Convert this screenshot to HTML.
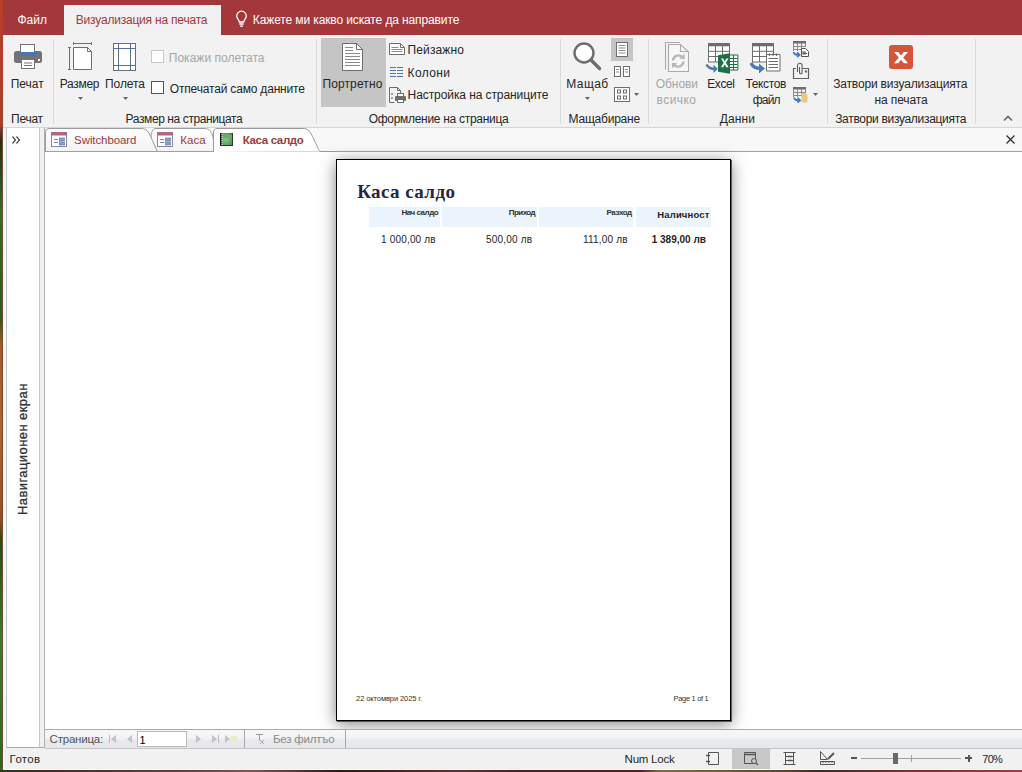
<!DOCTYPE html>
<html><head><meta charset="utf-8">
<style>
*{margin:0;padding:0;box-sizing:border-box}
html,body{width:1022px;height:772px;overflow:hidden;background:#f1f1f1;font-family:"Liberation Sans",sans-serif;color:#262626}
.a{position:absolute;white-space:nowrap}
.t{font-size:12px;line-height:14px}
.sep{position:absolute;width:1px;background:#dadada}
svg{position:absolute;overflow:visible}
.rp{font-family:"Liberation Sans",sans-serif;color:#262626}
</style></head><body>
<!-- wallpaper strips -->
<div class="a" style="left:0;top:0;width:3px;height:772px;background:linear-gradient(#b83e2a 0px,#a8402a 125px,#2a2a12 140px,#356a28 210px,#2e5a20 320px,#a8582a 345px,#b8602e 430px,#9a4a22 520px,#2a4a1a 540px,#3a7a2a 640px,#2a6a20 772px)"></div>
<div class="a" style="left:2px;top:128px;width:1px;height:642px;background:#7a4a30"></div>
<div class="a" style="left:0;top:770px;width:1022px;height:2px;background:linear-gradient(90deg,#2a3a1a 0px,#4a2a22 40px,#6a3a3a 180px,#8a5050 250px,#3a1414 340px,#6a2a34 460px,#5a1a22 520px,#5a1a1a 640px,#8a6a34 660px,#6a4a24 770px,#4a2a1a 820px,#8a2a2a 920px,#a83a3a 1022px)"></div>
<div class="a" style="left:3px;top:769px;width:1019px;height:1px;background:#fafafa"></div>

<!-- title/tab bar -->
<div class="a" style="left:3px;top:0;width:1019px;height:35px;background:#a4373a"></div>
<div class="a" style="left:64px;top:5px;width:157px;height:31px;background:#f1f1f1"></div>
<svg style="left:236px;top:11px" width="11" height="16" viewBox="0 0 11 16"><path d="M3.3 11 C3.3 8.8 0.7 7.6 0.7 5 A4.8 4.8 0 0 1 10.3 5 C10.3 7.6 7.7 8.8 7.7 11 Z" fill="none" stroke="#fff" stroke-width="1.3"/><path d="M3.3 13h4.4M4 15.2h3" stroke="#fff" stroke-width="1.3"/></svg>

<!-- ribbon body -->
<div class="a" style="left:3px;top:35px;width:1019px;height:93px;background:#f2f2f2;border-bottom:1px solid #d6d6d6"></div>

<!-- separators -->
<div class="sep" style="left:53px;top:39px;height:85px"></div>
<div class="sep" style="left:316px;top:39px;height:85px"></div>
<div class="sep" style="left:560px;top:39px;height:85px"></div>
<div class="sep" style="left:648px;top:39px;height:85px"></div>
<div class="sep" style="left:827px;top:39px;height:85px"></div>
<div class="sep" style="left:975px;top:39px;height:85px"></div>

<!-- Печат group -->
<svg style="left:14px;top:44px" width="28" height="25" viewBox="0 0 28 25">
 <rect x="0" y="7" width="28" height="12" rx="2.5" fill="#737373"/>
 <rect x="6.5" y="0.5" width="14" height="8" fill="#fff" stroke="#737373"/>
 <rect x="5" y="8" width="18" height="4" fill="#4a77b4"/>
 <rect x="7.5" y="15.5" width="13" height="9" fill="#fff" stroke="#737373"/>
 <path d="M10 19h8M10 21.5h8" stroke="#737373" stroke-width="1"/>
 <rect x="24" y="15" width="2" height="2" fill="#fff"/>
</svg>

<!-- Размер на страницата -->
<svg style="left:68px;top:42px" width="26" height="30" viewBox="0 0 26 30">
 <path d="M5.5 1.5h18M5.5 0v3M23.5 0v3" stroke="#56729c" stroke-width="1"/>
 <path d="M1.5 5.5v22M0 5.5h3M0 27.5h3" stroke="#56729c" stroke-width="1"/>
 <path d="M5.5 5.5h14l4 4v18h-18z" fill="#fff" stroke="#6d6d6d"/>
 <path d="M19.5 5.5v4h4" fill="none" stroke="#6d6d6d"/>
</svg>
<svg style="left:78px;top:97px" width="5" height="3"><path d="M0 0h5l-2.5 3z" fill="#666"/></svg>
<svg style="left:113px;top:43px" width="24" height="28" viewBox="0 0 24 28">
 <rect x="0.5" y="0.5" width="22" height="27" fill="#fff" stroke="#6d6d6d"/>
 <path d="M5.5 0.5v27M17.5 0.5v27M0.5 5.5h22M0.5 22.5h22" stroke="#56729c" stroke-width="1"/>
</svg>
<svg style="left:123px;top:97px" width="5" height="3"><path d="M0 0h5l-2.5 3z" fill="#666"/></svg>
<div class="a" style="left:151px;top:50px;width:13px;height:13px;border:1px solid #c8c8c8;background:#fff"></div>
<div class="a" style="left:151px;top:81px;width:13px;height:13px;border:1px solid #555;background:#fff"></div>

<!-- Оформление на страница -->
<div class="a" style="left:321px;top:38px;width:65px;height:69px;background:#c5c5c5"></div>
<svg style="left:342px;top:43px" width="21" height="28" viewBox="0 0 21 28">
 <path d="M0.5 0.5h14l6 6v21h-20z" fill="#fff" stroke="#6d6d6d"/>
 <path d="M14.5 0.5v6h6" fill="none" stroke="#6d6d6d"/>
 <path d="M3 4.5h8M3 7.5h8M3 10.5h15M3 13.5h15M3 16.5h15M3 19.5h15M3 22.5h15" stroke="#8a8a8a" stroke-width="1"/>
</svg>
<svg style="left:389px;top:43px" width="16" height="12" viewBox="0 0 16 12">
 <path d="M0.5 0.5h11l4 4v7h-15z" fill="#fff" stroke="#6d6d6d"/>
 <path d="M11.5 0.5v4h4" fill="none" stroke="#6d6d6d"/>
 <path d="M2.5 4.5h7M2.5 6.5h11M2.5 8.5h11" stroke="#8a8a8a"/>
</svg>
<svg style="left:390px;top:67px" width="14" height="10" viewBox="0 0 14 10">
 <path d="M0 0.5h6M0 3.5h6M0 6.5h6M0 9.5h6M7 0.5h6M7 3.5h6M7 6.5h6M7 9.5h6" stroke="#4f74aa" stroke-width="1.1"/>
</svg>
<svg style="left:389px;top:87px" width="17" height="16" viewBox="0 0 17 16">
 <path d="M0.5 0.5h8l3 3v3" fill="none" stroke="#6d6d6d"/>
 <path d="M0.5 0.5v15h5" fill="none" stroke="#6d6d6d"/>
 <path d="M8.5 0.5v3h3" fill="none" stroke="#6d6d6d"/>
 <circle cx="3" cy="7" r="1" fill="#888"/><circle cx="3" cy="11" r="1" fill="#888"/>
 <rect x="6" y="9" width="11" height="5" rx="1" fill="#6d6d6d"/>
 <rect x="8.5" y="6.5" width="6" height="3" fill="#fff" stroke="#6d6d6d"/>
 <rect x="8.5" y="12.5" width="6" height="3" fill="#fff" stroke="#6d6d6d"/>
</svg>

<!-- Мащабиране -->
<svg style="left:573px;top:42px" width="29" height="28" viewBox="0 0 29 28">
 <circle cx="11" cy="11" r="9.5" fill="#fff" stroke="#6d6d6d" stroke-width="2.4"/>
 <path d="M18 18l8.5 8.5" stroke="#6d6d6d" stroke-width="3.4" stroke-linecap="round"/>
</svg>
<svg style="left:585px;top:97px" width="5" height="3"><path d="M0 0h5l-2.5 3z" fill="#666"/></svg>
<div class="a" style="left:611px;top:38px;width:22px;height:23px;background:#c5c5c5"></div>
<svg style="left:616px;top:42px" width="12" height="15" viewBox="0 0 12 15">
 <rect x="0.5" y="0.5" width="11" height="14" fill="#fff" stroke="#6d6d6d"/>
 <path d="M2.5 3.5h7M2.5 6h7M2.5 8.5h7M2.5 11h7" stroke="#8a8a8a"/>
</svg>
<svg style="left:614px;top:66px" width="16" height="11" viewBox="0 0 16 11">
 <rect x="0.5" y="0.5" width="6" height="10" fill="#fff" stroke="#6d6d6d"/>
 <rect x="9.5" y="0.5" width="6" height="10" fill="#fff" stroke="#6d6d6d"/>
 <path d="M2 3.5h3M2 6h3M11 3.5h3M11 6h3" stroke="#8a8a8a"/>
</svg>
<svg style="left:614px;top:87px" width="16" height="15" viewBox="0 0 16 15">
 <rect x="0.5" y="0.5" width="15" height="14" fill="#fff" stroke="#6d6d6d"/>
 <rect x="3.5" y="3" width="3" height="3" fill="none" stroke="#6d6d6d"/>
 <rect x="9.5" y="3" width="3" height="3" fill="none" stroke="#6d6d6d"/>
 <rect x="3.5" y="9" width="3" height="3" fill="none" stroke="#6d6d6d"/>
 <rect x="9.5" y="9" width="3" height="3" fill="none" stroke="#6d6d6d"/>
</svg>
<svg style="left:634px;top:93px" width="5" height="3"><path d="M0 0h5l-2.5 3z" fill="#666"/></svg>

<!-- Данни -->
<svg style="left:664px;top:41px" width="26" height="32" viewBox="0 0 26 32">
 <path d="M1.5 28.5V1.5H16" fill="none" stroke="#ababab" stroke-width="1.1"/>
 <path d="M4.5 3.5h12l8 7.5v19.5h-20z" fill="#f8f6f8" stroke="#ababab" stroke-width="1.1"/>
 <path d="M16.5 3.5v7h8" fill="none" stroke="#ababab" stroke-width="1.1"/>
 <path d="M9 19.5a5.5 5.5 0 0 1 9.8-3" fill="none" stroke="#b8b8b8" stroke-width="2.4"/>
 <path d="M20.5 12.5l0.3 5.8-5.6-0.6z" fill="#b8b8b8"/>
 <path d="M19.5 20.5a5.5 5.5 0 0 1-9.8 3" fill="none" stroke="#b8b8b8" stroke-width="2.4"/>
 <path d="M8 27.5l-0.3-5.8 5.6 0.6z" fill="#b8b8b8"/>
</svg>

<svg style="left:705px;top:42px" width="34" height="32" viewBox="0 0 34 32">
 <rect x="3.5" y="1.5" width="21" height="18.5" fill="#fff" stroke="#6d6d6d"/>
 <rect x="3" y="1" width="22" height="3.3" fill="#6d6d6d"/>
 <path d="M3.5 9.3h21M3.5 14.5h21M10.5 4v16M17.5 4v16" stroke="#6d6d6d"/>
 <path d="M24.5 13h8.4v15h-8.4z" fill="#fff" stroke="#1e7145"/>
 <path d="M24.5 16.5h8M24.5 19.5h8M24.5 22.5h8M24.5 25.5h8M28.5 13v15" stroke="#1e7145"/>
 <path d="M13 13.2l12-2v20.5l-12-2z" fill="#1e7145"/>
 <path d="M16 16.5h2.2l1.6 2.8 1.6-2.8h2.2l-2.7 4.3 2.7 4.4h-2.2l-1.6-2.8-1.6 2.8h-2.2l2.7-4.4z" fill="#fff"/>
 <path d="M1.5 22.5c1.5 3 4.5 4.5 9 4.5" fill="none" stroke="#4a7ab5" stroke-width="2.6"/>
 <path d="M8.5 22.8l4.3 4.2-4.3 4z" fill="#4a7ab5"/>
</svg>
<svg style="left:749px;top:42px" width="34" height="32" viewBox="0 0 34 32">
 <rect x="3.5" y="1.5" width="21" height="18.5" fill="#fff" stroke="#6d6d6d"/>
 <rect x="3" y="1" width="22" height="3.3" fill="#6d6d6d"/>
 <path d="M3.5 9.3h21M3.5 14.5h21M10.5 4v16M17.5 4v16" stroke="#6d6d6d"/>
 <path d="M17.5 12.5h13.5v16.5h-13.5z" fill="#fff" stroke="#6d6d6d"/>
 <path d="M20.5 11.5v2.5M24 11.5v2.5M27.5 11.5v2.5" stroke="#6d6d6d" stroke-width="1.2"/>
 <path d="M19.5 16.5h9.5M19.5 19.5h9.5M19.5 22.5h9.5M19.5 25.5h9.5" stroke="#6d6d6d"/>
 <path d="M2 21c1.5 3.5 5 5.5 10 5.5" fill="none" stroke="#4a7ab5" stroke-width="3.2"/>
 <path d="M10 21.5l6 5-6 5z" fill="#4a7ab5"/>
</svg>
<svg style="left:792px;top:40px" width="18" height="18" viewBox="0 0 18 18">
 <rect x="1" y="1" width="13" height="2.5" fill="#6d6d6d"/>
 <path d="M1.5 3v8M1 6.5h13M1 9.5h9M5.5 3v8M9.5 3v8M13.5 3v4" stroke="#8a8a8a" stroke-width="1"/>
 <path d="M9.5 8.5h4l3 3v5h-7z" fill="#fff" stroke="#555"/>
 <path d="M11 12h2v2h-2zM12 13.5h3" stroke="#555" stroke-width="1.2" fill="none"/>
 <path d="M1.5 12c0.5 2 2 3 5 3M5 12.5l2.5 2.5-2.5 2" fill="none" stroke="#3f78c0" stroke-width="1.8"/>
</svg>
<svg style="left:792px;top:63px" width="18" height="17" viewBox="0 0 18 17">
 <path d="M4 5.5h-2.5v10h15v-10h-6" fill="none" stroke="#5f5f5f" stroke-width="1.2"/>
 <path d="M5.5 9v-6.5a2.3 2.3 0 0 1 4.6 0v7a1.3 1.3 0 0 1-2.6 0v-5.5" fill="none" stroke="#5f5f5f" stroke-width="1.1"/>
 <rect x="13" y="7.5" width="2" height="2" fill="#5f5f5f"/>
</svg>
<svg style="left:792px;top:86px" width="18" height="17" viewBox="0 0 18 17">
 <rect x="1" y="1" width="13" height="2.5" fill="#6d6d6d"/>
 <path d="M1.5 3v8M1 6.5h13M1 9.5h9M5.5 3v8M9.5 3v5M13.5 3v4" stroke="#8a8a8a" stroke-width="1"/>
 <path d="M9.5 7.5c1-1 3-1 4 0c1 0 2 1 2 2v6c0 0.5-0.5 1-1 1h-4c-0.5 0-1-0.5-1-1z" fill="#ebc77a"/>
 <path d="M2 11.5c0.5 2 2 3 5 3M5.5 12l2.5 2.5-2.5 2" fill="none" stroke="#3f78c0" stroke-width="1.8"/>
</svg>
<svg style="left:813px;top:93px" width="5" height="3"><path d="M0 0h5l-2.5 3z" fill="#666"/></svg>

<!-- Затвори -->
<div class="a" style="left:889px;top:45px;width:24px;height:24px;border-radius:3px;background:#d4553a"></div>
<svg style="left:889px;top:45px" width="24" height="24" viewBox="0 0 24 24"><path d="M5 7h4.2l2.8 3.4 2.8-3.4h4.2l-4.8 5.6 4.8 5.6h-4.2l-2.8-3.4-2.8 3.4h-4.2l4.8-5.6z" fill="#fff"/></svg>
<svg style="left:1003px;top:115px" width="10" height="6" viewBox="0 0 10 6"><path d="M1 5.5l4-4 4 4" fill="none" stroke="#666" stroke-width="1.6"/></svg>

<!-- document tab strip -->
<div class="a" style="left:3px;top:128px;width:1019px;height:24px;background:#f8f8f8;border-bottom:1px solid #a0a0a0"></div>

<!-- doc tabs -->
<div class="a" style="left:3px;top:128px;width:3px;height:620px;background:#fbf8f8"></div>
<div class="a" style="left:6px;top:128px;width:39px;height:620px;background:#fff;border-left:1px solid #c6c6c6;border-bottom:1px solid #a8a8a8"></div>
<div class="a" style="left:39px;top:128px;width:6px;height:620px;background:#f0f0f0;border-left:1px solid #c6c6c6;border-right:1px solid #b0b0b0;border-bottom:1px solid #a8a8a8"></div>
<svg style="left:12px;top:136px" width="9" height="8" viewBox="0 0 9 8"><path d="M0.5 0.5l3 3.5-3 3.5M4.5 0.5l3 3.5-3 3.5" fill="none" stroke="#444" stroke-width="1.2"/></svg>

<!-- tabs svg -->
<div class="a" style="left:45px;top:151px;width:977px;height:1px;background:#a0a0a0"></div>
<svg style="left:45px;top:127px" width="290" height="25" viewBox="0 0 290 25">
 <defs><linearGradient id="tg" x1="0" y1="0" x2="0" y2="1"><stop offset="0" stop-color="#ffffff"/><stop offset="1" stop-color="#f3f3f3"/></linearGradient></defs>
 <path d="M106,24.5 L106,9 C107,4 108,1.5 111,1.5 H159 C163,1.5 165,3 167,7 C168,10 168.5,12 168.5,14 V24.5 Z" fill="url(#tg)" stroke="#9a9a9a"/>
 <path d="M0.5,24.5 V5 Q0.5,1.5 4,1.5 H96 C100,1.5 102,3 104,6.5 C106,10 108,15 110,19 C111,22 112,24 113,24.5 Z" fill="url(#tg)" stroke="#9a9a9a"/>
 <path d="M0,24.5 H169" stroke="#a0a0a0"/>
 <path d="M168.5,25 V6 Q168.5,1.5 172,1.5 H258 C262,1.5 264,3 266,6.5 C268,10 270,15 272,19 C273,22 274,24 276,24.5 H290" fill="#fff" stroke="#9a9a9a"/>
</svg>
<svg style="left:51px;top:132px" width="16" height="15" viewBox="0 0 16 15">
 <rect x="0.5" y="0.5" width="15" height="14" fill="#fff" stroke="#7d8aa8"/>
 <rect x="0.5" y="0.5" width="15" height="3" fill="#c75a7a"/>
 <path d="M3 7.5h4M3 10.5h4" stroke="#7d8aa8"/>
 <rect x="8.5" y="6" width="5" height="3" fill="#8fa3c8" stroke="#5a6a98" stroke-width="0.6"/>
 <rect x="8.5" y="10" width="5" height="3" fill="#8fa3c8" stroke="#5a6a98" stroke-width="0.6"/>
</svg>
<svg style="left:157px;top:132px" width="16" height="15" viewBox="0 0 16 15">
 <rect x="0.5" y="0.5" width="15" height="14" fill="#fff" stroke="#7d8aa8"/>
 <rect x="0.5" y="0.5" width="15" height="3" fill="#c75a7a"/>
 <path d="M3 7.5h4M3 10.5h4" stroke="#7d8aa8"/>
 <rect x="8.5" y="6" width="5" height="3" fill="#8fa3c8" stroke="#5a6a98" stroke-width="0.6"/>
 <rect x="8.5" y="10" width="5" height="3" fill="#8fa3c8" stroke="#5a6a98" stroke-width="0.6"/>
</svg>
<svg style="left:220px;top:133px" width="13" height="13" viewBox="0 0 13 13">
 <defs><radialGradient id="gg" cx="0.45" cy="0.5" r="0.7"><stop offset="0" stop-color="#86c486"/><stop offset="0.7" stop-color="#5a9e5a"/><stop offset="1" stop-color="#2f5f2f"/></radialGradient></defs>
 <rect x="0" y="0" width="13" height="13" fill="url(#gg)"/>
 <rect x="0" y="0" width="1.6" height="13" fill="#111"/>
 <path d="M1.5 1.5h1M1.5 3.5h1M1.5 5.5h1M1.5 7.5h1M1.5 9.5h1M1.5 11.5h1" stroke="#e8f4e8" stroke-width="1"/>
 <rect x="4" y="2" width="8" height="3" fill="#6aaa6a"/>
 <path d="M0 12.5h13M12.5 0v13" stroke="#1f3f1f" stroke-width="1"/>
</svg>
<svg style="left:1006px;top:135px" width="9" height="9" viewBox="0 0 9 9"><path d="M0.5 0.5l8 8M8.5 0.5l-8 8" stroke="#333" stroke-width="1.3"/></svg>

<!-- document area -->
<div class="a" style="left:45px;top:152px;width:977px;height:577px;background:#fff"></div>

<!-- report page -->
<div class="a" style="left:336px;top:159px;width:395px;height:562px;background:#fff;border:1px solid #000;box-shadow:1px 1px 0 0 #5a5a5a,0 3px 15px 0 rgba(0,0,0,0.5)"></div>
<div class="a" style="left:369px;top:207px;width:71px;height:20px;background:#ebf4fc"></div>
<div class="a" style="left:442px;top:207px;width:95px;height:20px;background:#ebf4fc"></div>
<div class="a" style="left:539px;top:207px;width:94px;height:20px;background:#ebf4fc"></div>
<div class="a" style="left:636px;top:207px;width:75px;height:20px;background:#ebf4fc"></div>

<!-- record nav bar -->
<div class="a" style="left:45px;top:729px;width:977px;height:20px;background:linear-gradient(#f6f7f8 0px,#f2f3f5 8px,#e7e9ec 10px,#e5e7ea 18px);border-top:1px solid #a9a9a9;border-bottom:1px solid #c4c4c4"></div>
<svg style="left:109px;top:735px" width="7" height="8" viewBox="0 0 7 8"><path d="M0.5 0v8" stroke="#bbb"/><path d="M7 0v8L2 4z" fill="#c4c4c4"/></svg>
<svg style="left:127px;top:735px" width="5" height="8" viewBox="0 0 5 8"><path d="M5 0v8L0 4z" fill="#c4c4c4"/></svg>
<div class="a" style="left:137px;top:731px;width:50px;height:16px;background:#fff;border:1px solid #b9b9b9"></div>
<svg style="left:196px;top:735px" width="5" height="8" viewBox="0 0 5 8"><path d="M0 0v8L5 4z" fill="#c4c4c4"/></svg>
<svg style="left:212px;top:735px" width="7" height="8" viewBox="0 0 7 8"><path d="M6.5 0v8" stroke="#bbb"/><path d="M0 0v8L5 4z" fill="#c4c4c4"/></svg>
<svg style="left:225px;top:735px" width="13" height="8" viewBox="0 0 13 8"><path d="M0 0v8L5 4z" fill="#c4c4c4"/><path d="M6 1h6v6h-6z" fill="#ecebc8"/></svg>
<div class="a" style="left:244px;top:730px;width:1px;height:18px;background:#a8a8a8"></div>
<svg style="left:256px;top:734px" width="9" height="10" viewBox="0 0 9 10"><path d="M0 0.5h7M3.5 0.5v6" stroke="#999"/><path d="M4 6l4 4M8 6l-4 4" stroke="#aaa"/></svg>
<div class="a" style="left:345px;top:730px;width:1px;height:18px;background:#a8a8a8"></div>

<!-- status bar -->
<div class="a" style="left:3px;top:749px;width:1019px;height:20px;background:#f1f1f1;border-left:2px solid #fbf8f8"></div>
<svg style="left:705px;top:752px" width="15" height="13" viewBox="0 0 15 13"><path d="M3.5 0.5h10v12h-10z" fill="none" stroke="#555"/><path d="M1 3.5h4M1 9.5h4" stroke="#555" stroke-width="1.4"/></svg>
<div class="a" style="left:732px;top:749px;width:38px;height:20px;background:#c8c8c8"></div>
<svg style="left:744px;top:752px" width="15" height="13" viewBox="0 0 15 13"><path d="M0.5 0.5h11v11h-11z" fill="none" stroke="#555"/><path d="M0.5 2.5h11" stroke="#555" stroke-width="1.5"/><circle cx="10" cy="9" r="2.5" fill="#c8c8c8" stroke="#555"/><path d="M12 11l2 2" stroke="#555" stroke-width="1.3"/></svg>
<svg style="left:783px;top:752px" width="13" height="13" viewBox="0 0 13 13"><path d="M0.5 0.5h12M0.5 12.5h12M2.5 0.5v12M10.5 0.5v12M2.5 4.5h8M2.5 8.5h8" fill="none" stroke="#555"/><path d="M5 4.5h4M5 8.5h4" stroke="#555" stroke-width="1.5"/></svg>
<svg style="left:820px;top:751px" width="15" height="14" viewBox="0 0 15 14"><path d="M0.5 13.5h14v-3h-14z" fill="none" stroke="#555"/><path d="M3 10.5v1.5M6 10.5v1.5M9 10.5v1.5M12 10.5v1.5" stroke="#555"/><path d="M0.5 0.5v8h7z" fill="none" stroke="#555"/><path d="M8 8l6-6" stroke="#555" stroke-width="2"/></svg>
<div class="a" style="left:851px;top:757px;width:6px;height:2px;background:#555"></div>
<div class="a" style="left:861px;top:758px;width:100px;height:1px;background:#a0a0a0"></div>
<div class="a" style="left:911px;top:755px;width:1px;height:7px;background:#a0a0a0"></div>
<div class="a" style="left:893px;top:753px;width:5px;height:11px;background:#6a6a6a"></div>
<div class="a" style="left:965px;top:757px;width:7px;height:2px;background:#555"></div>
<div class="a" style="left:967.5px;top:754.5px;width:2px;height:7px;background:#555"></div>

<div class="a" style="left:17.5px;top:13px;color:#fff;font-family:'Liberation Sans',sans-serif;font-size:12px;font-weight:400;line-height:15px;letter-spacing:0.000px;white-space:nowrap">Файл</div>
<div class="a" style="left:75.8px;top:13px;color:#a4373a;font-family:'Liberation Sans',sans-serif;font-size:12px;font-weight:400;line-height:15px;letter-spacing:-0.205px;white-space:nowrap">Визуализация на печата</div>
<div class="a" style="left:252.8px;top:13px;color:#fff;font-family:'Liberation Sans',sans-serif;font-size:12px;font-weight:400;line-height:15px;letter-spacing:-0.118px;white-space:nowrap">Кажете ми какво искате да направите</div>
<div class="a" style="left:10.7px;top:77px;color:#262626;font-family:'Liberation Sans',sans-serif;font-size:12px;font-weight:400;line-height:15px;letter-spacing:0.000px;white-space:nowrap">Печат</div>
<div class="a" style="left:11.0px;top:112px;color:#262626;font-family:'Liberation Sans',sans-serif;font-size:12px;font-weight:400;line-height:15px;letter-spacing:-0.250px;white-space:nowrap">Печат</div>
<div class="a" style="left:59.8px;top:77px;color:#262626;font-family:'Liberation Sans',sans-serif;font-size:12px;font-weight:400;line-height:15px;letter-spacing:-0.320px;white-space:nowrap">Размер</div>
<div class="a" style="left:105.0px;top:77px;color:#262626;font-family:'Liberation Sans',sans-serif;font-size:12px;font-weight:400;line-height:15px;letter-spacing:-0.060px;white-space:nowrap">Полета</div>
<div class="a" style="left:168.8px;top:51px;color:#a6a6a6;font-family:'Liberation Sans',sans-serif;font-size:12px;font-weight:400;line-height:15px;letter-spacing:0.014px;white-space:nowrap">Покажи полетата</div>
<div class="a" style="left:169.8px;top:82px;color:#262626;font-family:'Liberation Sans',sans-serif;font-size:12px;font-weight:400;line-height:15px;letter-spacing:-0.181px;white-space:nowrap">Отпечатай само данните</div>
<div class="a" style="left:125.6px;top:112px;color:#262626;font-family:'Liberation Sans',sans-serif;font-size:12px;font-weight:400;line-height:15px;letter-spacing:-0.400px;white-space:nowrap">Размер на страницата</div>
<div class="a" style="left:322.4px;top:77px;color:#262626;font-family:'Liberation Sans',sans-serif;font-size:12px;font-weight:400;line-height:15px;letter-spacing:0.125px;white-space:nowrap">Портретно</div>
<div class="a" style="left:407.6px;top:43px;color:#262626;font-family:'Liberation Sans',sans-serif;font-size:12px;font-weight:400;line-height:15px;letter-spacing:0.114px;white-space:nowrap">Пейзажно</div>
<div class="a" style="left:407.6px;top:66px;color:#262626;font-family:'Liberation Sans',sans-serif;font-size:12px;font-weight:400;line-height:15px;letter-spacing:0.340px;white-space:nowrap">Колони</div>
<div class="a" style="left:407.6px;top:88px;color:#262626;font-family:'Liberation Sans',sans-serif;font-size:12px;font-weight:400;line-height:15px;letter-spacing:-0.086px;white-space:nowrap">Настройка на страниците</div>
<div class="a" style="left:368.7px;top:112px;color:#262626;font-family:'Liberation Sans',sans-serif;font-size:12px;font-weight:400;line-height:15px;letter-spacing:-0.295px;white-space:nowrap">Оформление на страница</div>
<div class="a" style="left:566.3px;top:77px;color:#262626;font-family:'Liberation Sans',sans-serif;font-size:12px;font-weight:400;line-height:15px;letter-spacing:0.425px;white-space:nowrap">Мащаб</div>
<div class="a" style="left:568.5px;top:112px;color:#262626;font-family:'Liberation Sans',sans-serif;font-size:12px;font-weight:400;line-height:15px;letter-spacing:-0.211px;white-space:nowrap">Мащабиране</div>
<div class="a" style="left:655.8px;top:77px;color:#a6a6a6;font-family:'Liberation Sans',sans-serif;font-size:12px;font-weight:400;line-height:15px;letter-spacing:-0.080px;white-space:nowrap">Обнови</div>
<div class="a" style="left:656.6px;top:93px;color:#a6a6a6;font-family:'Liberation Sans',sans-serif;font-size:12px;font-weight:400;line-height:15px;letter-spacing:0.400px;white-space:nowrap">всичко</div>
<div class="a" style="left:707.2px;top:77px;color:#262626;font-family:'Liberation Sans',sans-serif;font-size:12px;font-weight:400;line-height:15px;letter-spacing:-0.400px;white-space:nowrap">Excel</div>
<div class="a" style="left:745.4px;top:77px;color:#262626;font-family:'Liberation Sans',sans-serif;font-size:12px;font-weight:400;line-height:15px;letter-spacing:-0.350px;white-space:nowrap">Текстов</div>
<div class="a" style="left:752.8px;top:93px;color:#262626;font-family:'Liberation Sans',sans-serif;font-size:12px;font-weight:400;line-height:15px;letter-spacing:-0.833px;white-space:nowrap">файл</div>
<div class="a" style="left:719.7px;top:112px;color:#262626;font-family:'Liberation Sans',sans-serif;font-size:12px;font-weight:400;line-height:15px;letter-spacing:0.150px;white-space:nowrap">Данни</div>
<div class="a" style="left:833.2px;top:77px;color:#262626;font-family:'Liberation Sans',sans-serif;font-size:12px;font-weight:400;line-height:15px;letter-spacing:-0.171px;white-space:nowrap">Затвори визуализацията</div>
<div class="a" style="left:874.5px;top:93px;color:#262626;font-family:'Liberation Sans',sans-serif;font-size:12px;font-weight:400;line-height:15px;letter-spacing:-0.125px;white-space:nowrap">на печата</div>
<div class="a" style="left:835.2px;top:112px;color:#262626;font-family:'Liberation Sans',sans-serif;font-size:12px;font-weight:400;line-height:15px;letter-spacing:-0.314px;white-space:nowrap">Затвори визуализацията</div>
<div class="a" style="left:74.1px;top:133px;color:#9b3a3a;font-family:'Liberation Sans',sans-serif;font-size:11.5px;font-weight:400;line-height:15px;letter-spacing:-0.090px;white-space:nowrap">Switchboard</div>
<div class="a" style="left:180.3px;top:133px;color:#9b3a3a;font-family:'Liberation Sans',sans-serif;font-size:11.5px;font-weight:400;line-height:15px;letter-spacing:0.033px;white-space:nowrap">Каса</div>
<div class="a" style="left:242.7px;top:133px;color:#9b3a3a;font-family:'Liberation Sans',sans-serif;font-size:11.5px;font-weight:700;line-height:15px;letter-spacing:-0.344px;white-space:nowrap">Каса салдо</div>
<div class="a" style="left:357.2px;top:180px;color:#262640;font-family:'Liberation Serif',serif;font-size:19px;font-weight:700;line-height:24px;letter-spacing:0.411px;white-space:nowrap">Каса салдо</div>
<div class="a" style="left:401.4px;top:208px;color:#333;font-family:'Liberation Sans',sans-serif;font-size:8px;font-weight:700;line-height:10px;letter-spacing:-0.462px;white-space:nowrap">Нач салдо</div>
<div class="a" style="left:508.8px;top:208px;color:#333;font-family:'Liberation Sans',sans-serif;font-size:8px;font-weight:700;line-height:10px;letter-spacing:-0.560px;white-space:nowrap">Приход</div>
<div class="a" style="left:606.6px;top:208px;color:#333;font-family:'Liberation Sans',sans-serif;font-size:8px;font-weight:700;line-height:10px;letter-spacing:-0.480px;white-space:nowrap">Разход</div>
<div class="a" style="left:657.3px;top:209px;color:#262626;font-family:'Liberation Sans',sans-serif;font-size:9.5px;font-weight:700;line-height:12px;letter-spacing:0.138px;white-space:nowrap">Наличност</div>
<div class="a" style="left:381.0px;top:233px;color:#262626;font-family:'Liberation Sans',sans-serif;font-size:10px;font-weight:400;line-height:13px;letter-spacing:0.180px;white-space:nowrap">1 000,00 лв</div>
<div class="a" style="left:486.0px;top:233px;color:#262626;font-family:'Liberation Sans',sans-serif;font-size:10px;font-weight:400;line-height:13px;letter-spacing:0.200px;white-space:nowrap">500,00 лв</div>
<div class="a" style="left:582.9px;top:233px;color:#262626;font-family:'Liberation Sans',sans-serif;font-size:10px;font-weight:400;line-height:13px;letter-spacing:0.213px;white-space:nowrap">111,00 лв</div>
<div class="a" style="left:651.7px;top:233px;color:#262626;font-family:'Liberation Sans',sans-serif;font-size:10px;font-weight:700;line-height:13px;letter-spacing:0.000px;white-space:nowrap">1 389,00 лв</div>
<div class="a" style="left:356.1px;top:694px;color:#333;font-family:'Liberation Sans',sans-serif;font-size:7.5px;font-weight:400;line-height:10px;letter-spacing:-0.094px;white-space:nowrap">22 октомври 2025 г.</div>
<div class="a" style="left:673.6px;top:694px;color:#333;font-family:'Liberation Sans',sans-serif;font-size:7.5px;font-weight:400;line-height:10px;letter-spacing:-0.330px;white-space:nowrap">Page 1 of 1</div>
<div class="a" style="left:49.6px;top:732px;color:#555;font-family:'Liberation Sans',sans-serif;font-size:11.5px;font-weight:400;line-height:15px;letter-spacing:-0.225px;white-space:nowrap">Страница:</div>
<div class="a" style="left:139.5px;top:733px;color:#000;font-family:'Liberation Sans',sans-serif;font-size:11px;font-weight:400;line-height:14px;letter-spacing:0.000px;white-space:nowrap">1</div>
<div class="a" style="left:273.0px;top:732px;color:#8a8a8a;font-family:'Liberation Sans',sans-serif;font-size:11.5px;font-weight:400;line-height:15px;letter-spacing:-0.222px;white-space:nowrap">Без филтъо</div>
<div class="a" style="left:9.6px;top:752px;color:#262626;font-family:'Liberation Sans',sans-serif;font-size:11.5px;font-weight:400;line-height:15px;letter-spacing:0.325px;white-space:nowrap">Готов</div>
<div class="a" style="left:624.6px;top:752px;color:#262626;font-family:'Liberation Sans',sans-serif;font-size:11.5px;font-weight:400;line-height:15px;letter-spacing:-0.243px;white-space:nowrap">Num Lock</div>
<div class="a" style="left:982.2px;top:752px;color:#262626;font-family:'Liberation Sans',sans-serif;font-size:11px;font-weight:400;line-height:14px;letter-spacing:-0.650px;white-space:nowrap">70%</div>
<div class="a" style="left:15px;top:515px;transform-origin:0 0;transform:rotate(-90deg);font-family:'Liberation Sans',sans-serif;font-size:13px;line-height:15px;font-weight:normal;color:#333;letter-spacing:0.42px;-webkit-text-stroke:0.3px #333">Навигационен екран</div>
</body></html>
